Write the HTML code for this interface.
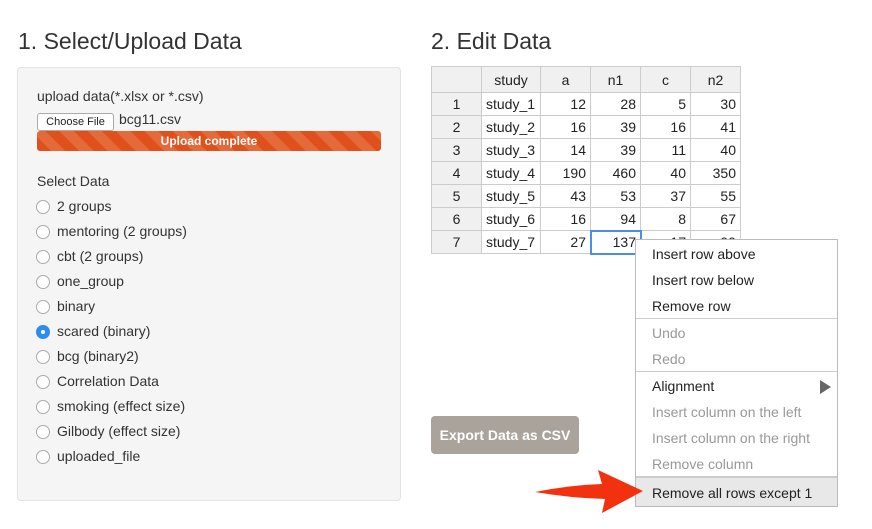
<!DOCTYPE html>
<html><head><style>
*{box-sizing:border-box;margin:0;padding:0}
body{width:872px;height:529px;background:#fff;font-family:"Liberation Sans",sans-serif;color:#333;position:relative;overflow:hidden}
.abs{position:absolute}
h2{position:absolute;font-weight:400;font-size:23px;color:#333}
.panel{left:17px;top:67px;width:384px;height:434px;background:#f5f5f5;border:1px solid #e3e3e3;border-radius:4px}
.lbl{font-size:14px;color:#333}
.radio{position:absolute;left:36px;font-size:14px;color:#333}
.radio i{position:absolute;left:0;top:2px;width:14px;height:14px;border:1px solid #aaa;border-radius:50%;background:#fff}
.radio span{position:absolute;left:21px;top:0;white-space:nowrap}
.radio.on i{background:#2d8cf0;border-color:#2d8cf0}
.radio.on i:after{content:"";position:absolute;left:4px;top:4px;width:4px;height:4px;border-radius:50%;background:#fff}
table{position:absolute;left:431px;top:66px;border-collapse:collapse;font-size:14px}
td{border:1px solid #ccc;height:23px;padding:0 4px;text-align:right;color:#222}
tr:first-child td{height:26px;background:#f0f0f0;text-align:center}
td:first-child{background:#f0f0f0;text-align:center;width:50px}
td:nth-child(2){text-align:left;width:59px}
td:nth-child(n+3){width:50px}
.menu{left:635px;top:239px;width:203px;height:268px;background:#fff;border:1px solid #bbb;font-size:14px}
.mi{position:absolute;left:16px;white-space:nowrap;color:#222}
.dis{color:#999}
.sep{position:absolute;left:0;width:201px;height:1px;background:#ccc}
</style></head><body>
<h2 style="left:18px;top:28px">1. Select/Upload Data</h2>
<h2 style="left:431px;top:28px">2. Edit Data</h2>
<div class="abs panel"></div>
<div class="abs lbl" style="left:37px;top:88px">upload data(*.xlsx or *.csv)</div>
<div class="abs" style="left:37px;top:113px;width:77px;height:18px;background:#fff;border:1px solid #aaa;border-radius:3px;font-size:11px;text-align:center;line-height:16px;color:#222">Choose File</div>
<div class="abs lbl" style="left:119px;top:111px">bcg11.csv</div>
<div class="abs" style="left:37px;top:131px;width:344px;height:20px;border-radius:3px;background:repeating-linear-gradient(45deg,#e0501c 0 10px,#e56a3a 10px 20px);color:#fff;font-size:12px;font-weight:bold;text-align:center;line-height:20px">Upload complete</div>
<div class="abs lbl" style="left:37px;top:173px">Select Data</div>
<div class="radio" style="top:198px"><i></i><span>2 groups</span></div>
<div class="radio" style="top:223px"><i></i><span>mentoring (2 groups)</span></div>
<div class="radio" style="top:248px"><i></i><span>cbt (2 groups)</span></div>
<div class="radio" style="top:273px"><i></i><span>one_group</span></div>
<div class="radio" style="top:298px"><i></i><span>binary</span></div>
<div class="radio on" style="top:323px"><i></i><span>scared (binary)</span></div>
<div class="radio" style="top:348px"><i></i><span>bcg (binary2)</span></div>
<div class="radio" style="top:373px"><i></i><span>Correlation Data</span></div>
<div class="radio" style="top:398px"><i></i><span>smoking (effect size)</span></div>
<div class="radio" style="top:423px"><i></i><span>Gilbody (effect size)</span></div>
<div class="radio" style="top:448px"><i></i><span>uploaded_file</span></div>
<table>
<tr><td></td><td style="text-align:center">study</td><td>a</td><td>n1</td><td>c</td><td>n2</td></tr>
<tr><td>1</td><td>study_1</td><td>12</td><td>28</td><td>5</td><td>30</td></tr>
<tr><td>2</td><td>study_2</td><td>16</td><td>39</td><td>16</td><td>41</td></tr>
<tr><td>3</td><td>study_3</td><td>14</td><td>39</td><td>11</td><td>40</td></tr>
<tr><td>4</td><td>study_4</td><td>190</td><td>460</td><td>40</td><td>350</td></tr>
<tr><td>5</td><td>study_5</td><td>43</td><td>53</td><td>37</td><td>55</td></tr>
<tr><td>6</td><td>study_6</td><td>16</td><td>94</td><td>8</td><td>67</td></tr>
<tr><td>7</td><td>study_7</td><td>27</td><td style="outline:2px solid #4a8ee6;outline-offset:-1px">137</td><td>17</td><td>99</td></tr>
</table>
<div class="abs" style="left:431px;top:416px;width:148px;height:38px;background:#aaa39b;border-radius:4px;color:#fff;font-size:14px;font-weight:bold;text-align:center;line-height:38px">Export Data as CSV</div>
<div class="abs menu">
<div class="mi" style="top:6px">Insert row above</div>
<div class="mi" style="top:32px">Insert row below</div>
<div class="mi" style="top:58px">Remove row</div>
<div class="sep" style="top:78px"></div>
<div class="mi dis" style="top:85px">Undo</div>
<div class="mi dis" style="top:111px">Redo</div>
<div class="sep" style="top:131px"></div>
<div class="mi" style="top:138px">Alignment</div>
<div class="abs" style="left:184px;top:140px;width:0;height:0;border-left:11px solid #666;border-top:7px solid transparent;border-bottom:7px solid transparent"></div>
<div class="mi dis" style="top:164px">Insert column on the left</div>
<div class="mi dis" style="top:190px">Insert column on the right</div>
<div class="mi dis" style="top:216px">Remove column</div>
<div class="abs" style="left:0;top:236px;width:201px;height:30px;background:#e8e8e8;border-top:2px solid #ccc"></div>
<div class="mi" style="top:245px">Remove all rows except 1</div>
</div>
<svg class="abs" style="left:530px;top:465px" width="115" height="55"><path d="M5 27 Q40 20 72 19 L68 5 L113 26 L72 48 L75 34 Q40 33 5 27Z" fill="#f2320f"/></svg>
</body></html>
